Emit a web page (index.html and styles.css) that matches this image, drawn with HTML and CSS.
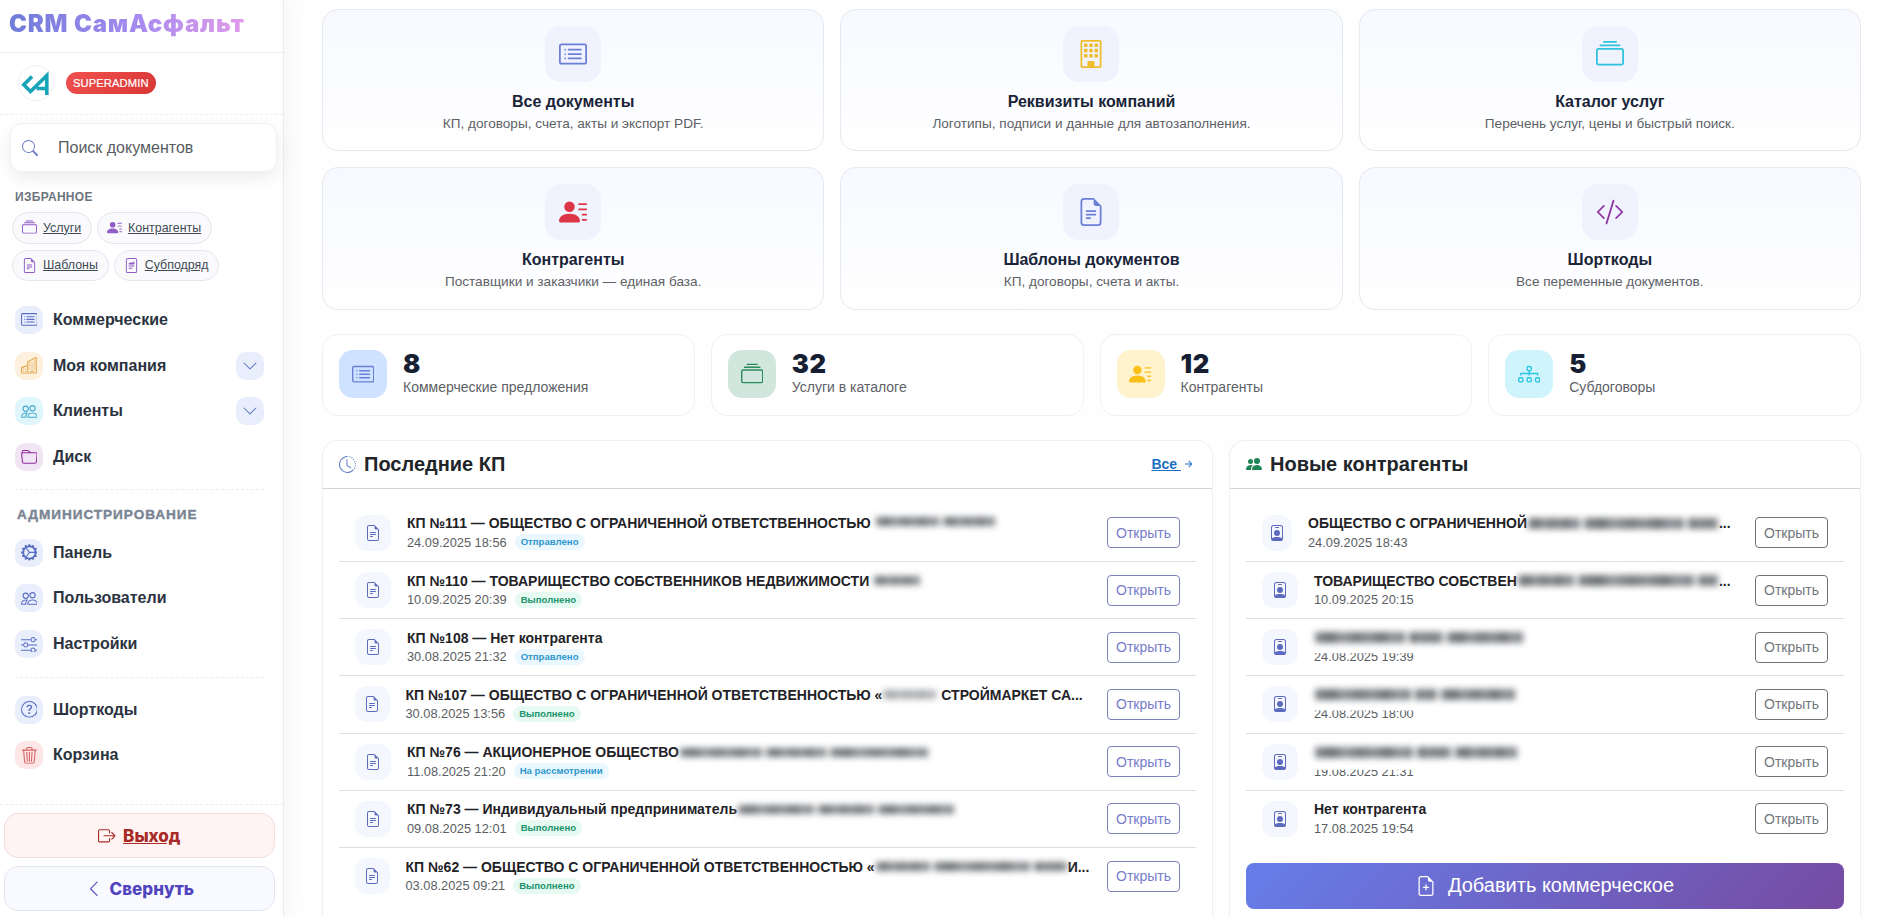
FILE: index.html
```html
<!DOCTYPE html>
<html lang="ru">
<head>
  <meta charset="UTF-8">
  <meta name="viewport" content="width=device-width, initial-scale=1.0">
  <title>CRM СамАсфальт</title>
  <link rel="stylesheet" href="styles.css">
</head>
<body>
  <!-- иконки -->
  <svg class="sprite" aria-hidden="true">
    <symbol id="card-list" viewBox="0 0 16 16"><path d="M14.5 3a.5.5 0 0 1 .5.5v9a.5.5 0 0 1-.5.5h-13a.5.5 0 0 1-.5-.5v-9a.5.5 0 0 1 .5-.5zm-13-1A1.5 1.5 0 0 0 0 3.5v9A1.5 1.5 0 0 0 1.5 14h13a1.5 1.5 0 0 0 1.5-1.5v-9A1.5 1.5 0 0 0 14.5 2z"/><path d="M5 8a.5.5 0 0 1 .5-.5h7a.5.5 0 0 1 0 1h-7A.5.5 0 0 1 5 8m0-2.5a.5.5 0 0 1 .5-.5h7a.5.5 0 0 1 0 1h-7a.5.5 0 0 1-.5-.5m0 5a.5.5 0 0 1 .5-.5h7a.5.5 0 0 1 0 1h-7a.5.5 0 0 1-.5-.5m-1-5a.5.5 0 1 1-1 0 .5.5 0 0 1 1 0M4 8a.5.5 0 1 1-1 0 .5.5 0 0 1 1 0m0 2.5a.5.5 0 1 1-1 0 .5.5 0 0 1 1 0"/></symbol>
    <symbol id="building" viewBox="0 0 16 16"><path d="M4.5 2h1a.5.5 0 0 1 .5.5v1a.5.5 0 0 1-.5.5h-1a.5.5 0 0 1-.5-.5v-1a.5.5 0 0 1 .5-.5m3 0h1a.5.5 0 0 1 .5.5v1a.5.5 0 0 1-.5.5h-1a.5.5 0 0 1-.5-.5v-1a.5.5 0 0 1 .5-.5m3 0h1a.5.5 0 0 1 .5.5v1a.5.5 0 0 1-.5.5h-1a.5.5 0 0 1-.5-.5v-1a.5.5 0 0 1 .5-.5m-6 3h1a.5.5 0 0 1 .5.5v1a.5.5 0 0 1-.5.5h-1a.5.5 0 0 1-.5-.5v-1a.5.5 0 0 1 .5-.5m3 0h1a.5.5 0 0 1 .5.5v1a.5.5 0 0 1-.5.5h-1a.5.5 0 0 1-.5-.5v-1a.5.5 0 0 1 .5-.5m3 0h1a.5.5 0 0 1 .5.5v1a.5.5 0 0 1-.5.5h-1a.5.5 0 0 1-.5-.5v-1a.5.5 0 0 1 .5-.5m-6 3h1a.5.5 0 0 1 .5.5v1a.5.5 0 0 1-.5.5h-1a.5.5 0 0 1-.5-.5v-1a.5.5 0 0 1 .5-.5m3 0h1a.5.5 0 0 1 .5.5v1a.5.5 0 0 1-.5.5h-1a.5.5 0 0 1-.5-.5v-1a.5.5 0 0 1 .5-.5m3 0h1a.5.5 0 0 1 .5.5v1a.5.5 0 0 1-.5.5h-1a.5.5 0 0 1-.5-.5v-1a.5.5 0 0 1 .5-.5"/><path d="M2 1a1 1 0 0 1 1-1h10a1 1 0 0 1 1 1v14a1 1 0 0 1-1 1H3a1 1 0 0 1-1-1zm11 0H3v14h3v-2.5a.5.5 0 0 1 .5-.5h3a.5.5 0 0 1 .5.5V15h3z"/></symbol>
    <symbol id="buildings" viewBox="0 0 16 16"><path d="M14.763.075A.5.5 0 0 1 15 .5v15a.5.5 0 0 1-.5.5h-3a.5.5 0 0 1-.5-.5V14h-1v1.5a.5.5 0 0 1-.5.5h-9a.5.5 0 0 1-.5-.5V10a.5.5 0 0 1 .342-.474L6 7.64V4.5a.5.5 0 0 1 .276-.447l8-4a.5.5 0 0 1 .487.022M6 8.694 1 10.36V15h5zM7 15h2v-1.5a.5.5 0 0 1 .5-.5h2a.5.5 0 0 1 .5.5V15h2V1.309l-7 3.5z"/><path d="M2 11h1v1H2zm2 0h1v1H4zm-2 2h1v1H2zm2 0h1v1H4zm4-4h1v1H8zm2 0h1v1h-1zm-2 2h1v1H8zm2 0h1v1h-1zm2-2h1v1h-1zm0 2h1v1h-1zM8 7h1v1H8zm2 0h1v1h-1zm2 0h1v1h-1zM8 5h1v1H8zm2 0h1v1h-1zm2 0h1v1h-1zm0-2h1v1h-1z"/></symbol>
    <symbol id="collection" viewBox="0 0 16 16"><path d="M2.5 3.5a.5.5 0 0 1 0-1h11a.5.5 0 0 1 0 1zm2-2a.5.5 0 0 1 0-1h7a.5.5 0 0 1 0 1zM0 13a1.5 1.5 0 0 0 1.5 1.5h13A1.5 1.5 0 0 0 16 13V6a1.5 1.5 0 0 0-1.5-1.5h-13A1.5 1.5 0 0 0 0 6zm1.5.5A.5.5 0 0 1 1 13V6a.5.5 0 0 1 .5-.5h13a.5.5 0 0 1 .5.5v7a.5.5 0 0 1-.5.5z"/></symbol>
    <symbol id="person-lines" viewBox="0 0 16 16"><path d="M6 8a3 3 0 1 0 0-6 3 3 0 0 0 0 6m-5 6s-1 0-1-1 1-4 6-4 6 3 6 4-1 1-1 1zM11 3.5a.5.5 0 0 1 .5-.5h4a.5.5 0 0 1 0 1h-4a.5.5 0 0 1-.5-.5m.5 2.5a.5.5 0 0 0 0 1h4a.5.5 0 0 0 0-1zm2 3a.5.5 0 0 0 0 1h2a.5.5 0 0 0 0-1zm0 3a.5.5 0 0 0 0 1h2a.5.5 0 0 0 0-1z"/></symbol>
    <symbol id="file-text" viewBox="0 0 16 16"><path d="M5.5 7a.5.5 0 0 0 0 1h5a.5.5 0 0 0 0-1zM5 9.5a.5.5 0 0 1 .5-.5h5a.5.5 0 0 1 0 1h-5a.5.5 0 0 1-.5-.5m0 2a.5.5 0 0 1 .5-.5h2a.5.5 0 0 1 0 1h-2a.5.5 0 0 1-.5-.5"/><path d="M9.5 0H4a2 2 0 0 0-2 2v12a2 2 0 0 0 2 2h8a2 2 0 0 0 2-2V4.5zm0 1v2A1.5 1.5 0 0 0 11 4.5h2V14a1 1 0 0 1-1 1H4a1 1 0 0 1-1-1V2a1 1 0 0 1 1-1z"/></symbol>
    <symbol id="file-plus" viewBox="0 0 16 16"><path d="M8 6.5a.5.5 0 0 1 .5.5v1.5H10a.5.5 0 0 1 0 1H8.5V11a.5.5 0 0 1-1 0V9.5H6a.5.5 0 0 1 0-1h1.5V7a.5.5 0 0 1 .5-.5"/><path d="M14 4.5V14a2 2 0 0 1-2 2H4a2 2 0 0 1-2-2V2a2 2 0 0 1 2-2h5.5zm-3 0A1.5 1.5 0 0 1 9.5 3V1H4a1 1 0 0 0-1 1v12a1 1 0 0 0 1 1h8a1 1 0 0 0 1-1V4.5z"/></symbol>
    <symbol id="file-sub" viewBox="0 0 16 16"><path d="M4 0a2 2 0 0 0-2 2v12a2 2 0 0 0 2 2h8a2 2 0 0 0 2-2V2a2 2 0 0 0-2-2zm0 1h8a1 1 0 0 1 1 1v12a1 1 0 0 1-1 1H4a1 1 0 0 1-1-1V2a1 1 0 0 1 1-1"/><path d="M5 5.200h1.500l1-1 1 1 2.500-1.700v3.300H5zM5 8h6v1H5zm0 2.500h4v1H5z"/></symbol>
    <symbol id="code-slash" viewBox="0 0 16 16"><path d="M10.478 1.647a.5.5 0 1 0-.956-.294l-4 13a.5.5 0 0 0 .956.294zM4.854 4.146a.5.5 0 0 1 0 .708L1.707 8l3.147 3.146a.5.5 0 0 1-.708.708l-3.5-3.5a.5.5 0 0 1 0-.708l3.5-3.5a.5.5 0 0 1 .708 0m6.292 0a.5.5 0 0 0 0 .708L14.293 8l-3.147 3.146a.5.5 0 0 0 .708.708l3.5-3.5a.5.5 0 0 0 0-.708l-3.5-3.5a.5.5 0 0 0-.708 0"/></symbol>
    <symbol id="search" viewBox="0 0 16 16"><path d="M11.742 10.344a6.5 6.5 0 1 0-1.397 1.398h-.001q.044.06.098.115l3.85 3.85a1 1 0 0 0 1.415-1.414l-3.85-3.85a1 1 0 0 0-.115-.1zM12 6.5a5.5 5.5 0 1 1-11 0 5.5 5.5 0 0 1 11 0"/></symbol>
    <symbol id="people" viewBox="0 0 16 16"><path d="M15 14s1 0 1-1-1-4-5-4-5 3-5 4 1 1 1 1zm-7.978-1L7 12.996c.001-.264.167-1.03.76-1.72C8.312 10.629 9.282 10 11 10c1.717 0 2.687.63 3.24 1.276.593.69.758 1.457.76 1.72l-.008.002-.014.002zM11 7a2 2 0 1 0 0-4 2 2 0 0 0 0 4m3-2a3 3 0 1 1-6 0 3 3 0 0 1 6 0M6.936 9.28a6 6 0 0 0-1.23-.247A7 7 0 0 0 5 9c-4 0-5 3-5 4q0 1 1 1h4.216A2.24 2.24 0 0 1 5 13c0-1.010.377-2.042 1.09-2.904.243-.294.526-.569.846-.816M4.920 10A5.500 5.500 0 0 0 4 13H1c0-.26.164-1.03.76-1.724.545-.636 1.492-1.256 3.160-1.275zM1.500 5.500a3 3 0 1 1 6 0 3 3 0 0 1-6 0m3-2a2 2 0 1 0 0 4 2 2 0 0 0 0-4"/></symbol>
    <symbol id="people-fill" viewBox="0 0 16 16"><path d="M7 14s-1 0-1-1 1-4 5-4 5 3 5 4-1 1-1 1zm4-6a3 3 0 1 0 0-6 3 3 0 0 0 0 6m-5.784 6A2.24 2.24 0 0 1 5 13c0-1.355.68-2.75 1.936-3.72A6.3 6.3 0 0 0 5 9c-4 0-5 3-5 4s1 1 1 1zM4.5 8a2.5 2.5 0 1 0 0-5 2.5 2.5 0 0 0 0 5"/></symbol>
    <symbol id="person-badge" viewBox="0 0 16 16"><path d="M6.5 2a.5.5 0 0 0 0 1h3a.5.5 0 0 0 0-1zM11 8a3 3 0 1 1-6 0 3 3 0 0 1 6 0"/><path d="M4.5 0A2.5 2.5 0 0 0 2 2.5V14a2 2 0 0 0 2 2h8a2 2 0 0 0 2-2V2.5A2.5 2.5 0 0 0 11.5 0zM3 2.5A1.5 1.5 0 0 1 4.5 1h7A1.5 1.5 0 0 1 13 2.5v10.795a4.2 4.2 0 0 0-.776-.492C11.392 12.387 10.063 12 8 12s-3.392.387-4.224.803a4.2 4.2 0 0 0-.776.492z"/></symbol>
    <symbol id="folder" viewBox="0 0 16 16"><path d="M.54 3.87.5 3a2 2 0 0 1 2-2h3.672a2 2 0 0 1 1.414.586l.828.828A2 2 0 0 0 9.828 3h3.982a2 2 0 0 1 1.992 2.181l-.637 7A2 2 0 0 1 13.174 14H2.826a2 2 0 0 1-1.991-1.819l-.637-7a2 2 0 0 1 .342-1.31zM2.19 4a1 1 0 0 0-.996 1.09l.637 7a1 1 0 0 0 .995.91h10.348a1 1 0 0 0 .995-.91l.637-7A1 1 0 0 0 13.81 4zm4.69-1.707A1 1 0 0 0 6.172 2H2.5a1 1 0 0 0-1 .981l.006.139q.323-.119.684-.12h5.396z"/></symbol>
    <symbol id="gear" viewBox="0 0 16 16"><path d="M7.068.727c.243-.97 1.62-.97 1.864 0l.071.286a.96.96 0 0 0 1.622.434l.205-.211c.695-.719 1.888-.03 1.613.931l-.08.284a.96.96 0 0 0 1.187 1.187l.283-.081c.96-.275 1.65.918.931 1.613l-.211.205a.96.96 0 0 0 .434 1.622l.286.071c.97.243.97 1.62 0 1.864l-.286.071a.96.96 0 0 0-.434 1.622l.211.205c.719.695.03 1.888-.931 1.613l-.284-.08a.96.96 0 0 0-1.187 1.187l.081.283c.275.96-.918 1.65-1.613.931l-.205-.211a.96.96 0 0 0-1.622.434l-.071.286c-.243.97-1.62.97-1.864 0l-.071-.286a.96.96 0 0 0-1.622-.434l-.205.211c-.695.719-1.888.03-1.613-.931l.08-.284a.96.96 0 0 0-1.186-1.187l-.284.081c-.96.275-1.65-.918-.931-1.613l.211-.205a.96.96 0 0 0-.434-1.622l-.286-.071c-.97-.243-.97-1.62 0-1.864l.286-.071a.96.96 0 0 0 .434-1.622l-.211-.205c-.719-.695-.03-1.888.931-1.613l.284.08a.96.96 0 0 0 1.187-1.186l-.081-.284c-.275-.96.918-1.65 1.613-.931l.205.211a.96.96 0 0 0 1.622-.434zM12.973 8.5H8.25l-2.834 3.779A4.998 4.998 0 0 0 12.973 8.5m0-1a4.998 4.998 0 0 0-7.557-3.779l2.834 3.78zM5.048 3.967l-.087.065zm-.431.355A4.98 4.98 0 0 0 3.002 8c0 1.455.622 2.765 1.615 3.678L7.375 8zm.344 7.646.087.065z"/></symbol>
    <symbol id="sliders" viewBox="0 0 16 16"><path fill-rule="evenodd" d="M11.5 2a1.5 1.5 0 1 0 0 3 1.5 1.5 0 0 0 0-3M9.05 3a2.5 2.5 0 0 1 4.9 0H16v1h-2.05a2.5 2.5 0 0 1-4.9 0H0V3zM4.5 7a1.5 1.5 0 1 0 0 3 1.5 1.5 0 0 0 0-3M2.05 8a2.5 2.5 0 0 1 4.9 0H16v1H6.95a2.5 2.5 0 0 1-4.9 0H0V8zm9.45 4a1.5 1.5 0 1 0 0 3 1.5 1.5 0 0 0 0-3m-2.45 1a2.5 2.5 0 0 1 4.9 0H16v1h-2.05a2.5 2.5 0 0 1-4.9 0H0v-1z"/></symbol>
    <symbol id="question" viewBox="0 0 16 16"><path d="M8 15A7 7 0 1 1 8 1a7 7 0 0 1 0 14m0 1A8 8 0 1 0 8 0a8 8 0 0 0 0 16"/><path d="M5.255 5.786a.237.237 0 0 0 .241.247h.825c.138 0 .248-.113.266-.25.09-.656.54-1.134 1.342-1.134.686 0 1.314.343 1.314 1.168 0 .635-.374.927-.965 1.371-.673.489-1.206 1.06-1.168 1.987l.003.217a.25.25 0 0 0 .25.246h.811a.25.25 0 0 0 .25-.25v-.105c0-.718.273-.927 1.01-1.486.609-.463 1.244-.977 1.244-2.056 0-1.511-1.276-2.241-2.673-2.241-1.267 0-2.655.59-2.75 2.286m1.557 5.763c0 .533.425.927 1.01.927.609 0 1.028-.394 1.028-.927 0-.552-.42-.94-1.029-.94-.584 0-1.009.388-1.009.94"/></symbol>
    <symbol id="trash" viewBox="0 0 16 16"><path d="M6.5 1h3a.5.5 0 0 1 .5.5v1H6v-1a.5.5 0 0 1 .5-.5M11 2.5v-1A1.5 1.5 0 0 0 9.5 0h-3A1.5 1.5 0 0 0 5 1.5v1H1.500a.5.5 0 0 0 0 1h.538l.853 10.66A2 2 0 0 0 4.885 16h6.23a2 2 0 0 0 1.994-1.84l.853-10.66h.538a.5.5 0 0 0 0-1zm1.958 1-.846 10.58a1 1 0 0 1-.997.92h-6.23a1 1 0 0 1-.997-.92L3.042 3.5zm-7.487 1a.5.5 0 0 1 .528.47l.5 8.5a.5.5 0 0 1-.998.06L5 5.03a.5.5 0 0 1 .47-.53zm5.058 0a.5.5 0 0 1 .47.53l-.5 8.5a.5.5 0 1 1-.998-.06l.5-8.5a.5.5 0 0 1 .528-.47M8 4.5a.5.5 0 0 1 .5.5v8.5a.5.5 0 0 1-1 0V5a.5.5 0 0 1 .5-.5"/></symbol>
    <symbol id="box-arrow" viewBox="0 0 16 16"><path d="M10 12.5a.5.5 0 0 1-.5.5h-8a.5.5 0 0 1-.5-.5v-9a.5.5 0 0 1 .5-.5h8a.5.5 0 0 1 .5.5v2a.5.5 0 0 0 1 0v-2A1.5 1.5 0 0 0 9.5 2h-8A1.5 1.5 0 0 0 0 3.5v9A1.5 1.5 0 0 0 1.5 14h8a1.5 1.5 0 0 0 1.5-1.5v-2a.5.5 0 0 0-1 0z"/><path d="M15.854 8.354a.5.5 0 0 0 0-.708l-3-3a.5.5 0 0 0-.708.708L14.293 7.5H5.5a.5.5 0 0 0 0 1h8.793l-2.147 2.146a.5.5 0 0 0 .708.708z"/></symbol>
    <symbol id="chevron-left" viewBox="0 0 16 16"><path d="M11.354 1.646a.5.5 0 0 1 0 .708L5.707 8l5.647 5.646a.5.5 0 0 1-.708.708l-6-6a.5.5 0 0 1 0-.708l6-6a.5.5 0 0 1 .708 0"/></symbol>
    <symbol id="chevron-down" viewBox="0 0 16 16"><path d="M1.646 4.646a.5.5 0 0 1 .708 0L8 10.293l5.646-5.647a.5.5 0 0 1 .708.708l-6 6a.5.5 0 0 1-.708 0l-6-6a.5.5 0 0 1 0-.708"/></symbol>
    <symbol id="arrow-right" viewBox="0 0 16 16"><path d="M4 8a.5.5 0 0 1 .5-.5h5.793L8.146 5.354a.5.5 0 1 1 .708-.708l3 3a.5.5 0 0 1 0 .708l-3 3a.5.5 0 0 1-.708-.708L10.293 8.5H4.5A.5.5 0 0 1 4 8"/></symbol>
    <symbol id="diagram" viewBox="0 0 16 16"><path fill-rule="evenodd" d="M6 3.5A1.5 1.5 0 0 1 7.5 2h1A1.5 1.5 0 0 1 10 3.5v1A1.5 1.5 0 0 1 8.5 6v1H14a.5.5 0 0 1 .5.5v1a.5.5 0 0 1-1 0V8h-5v.5a.5.5 0 0 1-1 0V8h-5v.5a.5.5 0 0 1-1 0v-1A.5.5 0 0 1 2 7h5.500V6A1.5 1.5 0 0 1 6 4.500zM8.500 5a.5.5 0 0 0 .5-.5v-1a.5.5 0 0 0-.5-.5h-1a.5.5 0 0 0-.5.5v1a.5.5 0 0 0 .5.5zM0 11.500A1.5 1.5 0 0 1 1.500 10h1A1.5 1.5 0 0 1 4 11.500v1A1.5 1.5 0 0 1 2.500 14h-1A1.5 1.5 0 0 1 0 12.500zm1.500-.5a.5.5 0 0 0-.5.5v1a.5.5 0 0 0 .5.5h1a.5.5 0 0 0 .5-.5v-1a.5.5 0 0 0-.5-.5zm4.500.5A1.5 1.5 0 0 1 7.500 10h1a1.5 1.5 0 0 1 1.500 1.500v1A1.5 1.5 0 0 1 8.500 14h-1A1.5 1.5 0 0 1 6 12.500zm1.500-.5a.5.5 0 0 0-.5.5v1a.5.5 0 0 0 .5.5h1a.5.5 0 0 0 .5-.5v-1a.5.5 0 0 0-.5-.5zm4.500.5a1.5 1.5 0 0 1 1.500-1.500h1a1.5 1.5 0 0 1 1.500 1.500v1a1.5 1.5 0 0 1-1.500 1.500h-1a1.5 1.5 0 0 1-1.500-1.500zm1.500-.5a.5.5 0 0 0-.5.5v1a.5.5 0 0 0 .5.5h1a.5.5 0 0 0 .5-.5v-1a.5.5 0 0 0-.5-.5z"/></symbol>
    <symbol id="clock" viewBox="0 0 16 16"><path d="M8.515 1.019A7 7 0 0 0 8 1V0a8 8 0 0 1 .589.022zm2.004.45a7 7 0 0 0-.985-.299l.219-.976q.576.129 1.126.342zm1.37.71a7 7 0 0 0-.439-.27l.493-.87a8 8 0 0 1 .979.654l-.615.789a7 7 0 0 0-.418-.302zm1.834 1.79a7 7 0 0 0-.653-.796l.724-.69q.406.429.747.91zm.744 1.352a7 7 0 0 0-.214-.468l.893-.45a8 8 0 0 1 .45 1.088l-.95.313a7 7 0 0 0-.179-.483m.53 2.507a7 7 0 0 0-.1-1.025l.985-.17q.1.58.116 1.17zm-.131 1.538q.05-.254.081-.51l.993.123a8 8 0 0 1-.23 1.155l-.964-.267q.069-.247.12-.501m-.952 2.379q.276-.436.486-.908l.914.405q-.24.54-.555 1.038zm-.964 1.205q.183-.183.35-.378l.758.653a8 8 0 0 1-.401.432z"/><path d="M8 1a7 7 0 1 0 4.95 11.95l.707.707A8.001 8.001 0 1 1 8 0z"/><path d="M7.5 3a.5.5 0 0 1 .5.5v5.21l3.248 1.856a.5.5 0 0 1-.496.868l-3.5-2A.5.5 0 0 1 7 9V3.5a.5.5 0 0 1 .5-.5"/></symbol>
  </svg>

  <aside class="sidebar">
    <div class="brand"><span class="brand-text">CRM СамАсфальт</span></div>

    <div class="user">
      <span class="avatar">
        <svg viewBox="0 0 34 34"><path d="M13 10.500 4.800 18.800l6.700 6.700L27.800 9.500V29M17.500 22.500h10" fill="none" stroke="#17a3b8" stroke-width="3.600"/></svg>
      </span>
      <span class="role">SUPERADMIN</span>
    </div>

    <div class="search">
      <svg class="icon"><use href="#search"/></svg>
      <span>Поиск документов</span>
    </div>

    <div class="fav-title">ИЗБРАННОЕ</div>
    <div class="favs">
      <a class="chip" href="#"><svg class="icon"><use href="#collection"/></svg><span>Услуги</span></a>
      <a class="chip" href="#"><svg class="icon"><use href="#person-lines"/></svg><span>Контрагенты</span></a>
      <a class="chip" href="#"><svg class="icon"><use href="#file-text"/></svg><span>Шаблоны</span></a>
      <a class="chip" href="#"><svg class="icon"><use href="#file-sub"/></svg><span>Субподряд</span></a>
    </div>

    <nav class="nav">
      <a class="nav-item" href="#"><span class="nav-icon"><svg class="icon"><use href="#card-list"/></svg></span>Коммерческие</a>
      <a class="nav-item" href="#"><span class="nav-icon orange"><svg class="icon"><use href="#buildings"/></svg></span>Моя компания<span class="toggle"><svg class="icon"><use href="#chevron-down"/></svg></span></a>
      <a class="nav-item" href="#"><span class="nav-icon cyan"><svg class="icon"><use href="#people"/></svg></span>Клиенты<span class="toggle"><svg class="icon"><use href="#chevron-down"/></svg></span></a>
      <a class="nav-item" href="#"><span class="nav-icon purple"><svg class="icon"><use href="#folder"/></svg></span>Диск</a>
      <div class="nav-title">АДМИНИСТРИРОВАНИЕ</div>
      <a class="nav-item" href="#"><span class="nav-icon"><svg class="icon"><use href="#gear"/></svg></span>Панель</a>
      <a class="nav-item" href="#"><span class="nav-icon"><svg class="icon"><use href="#people"/></svg></span>Пользователи</a>
      <a class="nav-item" href="#"><span class="nav-icon"><svg class="icon"><use href="#sliders"/></svg></span>Настройки</a>
      <div class="nav-sep"></div>
      <a class="nav-item" href="#"><span class="nav-icon"><svg class="icon"><use href="#question"/></svg></span>Шорткоды</a>
      <a class="nav-item" href="#"><span class="nav-icon red"><svg class="icon"><use href="#trash"/></svg></span>Корзина</a>
    </nav>

    <div class="side-footer">
      <a class="side-btn logout" href="#"><svg class="icon"><use href="#box-arrow"/></svg><span>Выход</span></a>
      <button class="side-btn collapse"><svg class="icon"><use href="#chevron-left"/></svg><span>Свернуть</span></button>
    </div>
  </aside>

  <main class="main">
    <section class="tiles">
      <a class="tile" href="#"><span class="tile-icon"><svg class="icon"><use href="#card-list"/></svg></span><b>Все документы</b><small>КП, договоры, счета, акты и экспорт PDF.</small></a>
      <a class="tile" href="#"><span class="tile-icon yellow"><svg class="icon"><use href="#building"/></svg></span><b>Реквизиты компаний</b><small>Логотипы, подписи и данные для автозаполнения.</small></a>
      <a class="tile" href="#"><span class="tile-icon aqua"><svg class="icon"><use href="#collection"/></svg></span><b>Каталог услуг</b><small>Перечень услуг, цены и быстрый поиск.</small></a>
      <a class="tile" href="#"><span class="tile-icon crimson"><svg class="icon"><use href="#person-lines"/></svg></span><b>Контрагенты</b><small>Поставщики и заказчики — единая база.</small></a>
      <a class="tile" href="#"><span class="tile-icon"><svg class="icon"><use href="#file-text"/></svg></span><b>Шаблоны документов</b><small>КП, договоры, счета и акты.</small></a>
      <a class="tile" href="#"><span class="tile-icon violet"><svg class="icon"><use href="#code-slash"/></svg></span><b>Шорткоды</b><small>Все переменные документов.</small></a>
    </section>

    <section class="stats">
      <div class="stat"><span class="stat-icon blue"><svg class="icon"><use href="#card-list"/></svg></span><div><div class="num">8</div><div class="label">Коммерческие предложения</div></div></div>
      <div class="stat"><span class="stat-icon green"><svg class="icon"><use href="#collection"/></svg></span><div><div class="num">32</div><div class="label">Услуги в каталоге</div></div></div>
      <div class="stat"><span class="stat-icon amber"><svg class="icon"><use href="#person-lines"/></svg></span><div><div class="num">12</div><div class="label">Контрагенты</div></div></div>
      <div class="stat"><span class="stat-icon sky"><svg class="icon"><use href="#diagram"/></svg></span><div><div class="num">5</div><div class="label">Субдоговоры</div></div></div>
    </section>

    <section class="panels">
      <div class="panel">
        <div class="panel-head">
          <h2><svg class="icon indigo"><use href="#clock"/></svg>Последние КП</h2>
          <a class="all" href="#"><u>Все </u><svg class="icon"><use href="#arrow-right"/></svg></a>
        </div>
        <div class="panel-body">
          <div class="row">
            <span class="row-icon"><svg class="icon"><use href="#file-text"/></svg></span>
            <div class="row-text"><div class="row-title">КП №111 — ОБЩЕСТВО С ОГРАНИЧЕННОЙ ОТВЕТСТВЕННОСТЬЮ <span class="mask high"><i style="width:63px"></i><i style="width:52px"></i></span></div><div class="row-meta">24.09.2025 18:56 <span class="badge sent">Отправлено</span></div></div>
            <button class="open">Открыть</button>
          </div>
          <div class="row">
            <span class="row-icon"><svg class="icon"><use href="#file-text"/></svg></span>
            <div class="row-text"><div class="row-title">КП №110 — ТОВАРИЩЕСТВО СОБСТВЕННИКОВ НЕДВИЖИМОСТИ <span class="mask"><i style="width:46px"></i></span></div><div class="row-meta">10.09.2025 20:39 <span class="badge done">Выполнено</span></div></div>
            <button class="open">Открыть</button>
          </div>
          <div class="row">
            <span class="row-icon"><svg class="icon"><use href="#file-text"/></svg></span>
            <div class="row-text"><div class="row-title">КП №108 — Нет контрагента</div><div class="row-meta">30.08.2025 21:32 <span class="badge sent">Отправлено</span></div></div>
            <button class="open">Открыть</button>
          </div>
          <div class="row tight">
            <span class="row-icon"><svg class="icon"><use href="#file-text"/></svg></span>
            <div class="row-text"><div class="row-title">КП №107 — ОБЩЕСТВО С ОГРАНИЧЕННОЙ ОТВЕТСТВЕННОСТЬЮ «<span class="mask pale"><i style="width:53px"></i></span> СТРОЙМАРКЕТ СА...</div><div class="row-meta">30.08.2025 13:56 <span class="badge done">Выполнено</span></div></div>
            <button class="open">Открыть</button>
          </div>
          <div class="row">
            <span class="row-icon"><svg class="icon"><use href="#file-text"/></svg></span>
            <div class="row-text"><div class="row-title">КП №76 — АКЦИОНЕРНОЕ ОБЩЕСТВО<span class="mask"><i style="width:82px"></i><i style="width:60px"></i><i style="width:98px"></i></span></div><div class="row-meta">11.08.2025 21:20 <span class="badge sent">На рассмотрении</span></div></div>
            <button class="open">Открыть</button>
          </div>
          <div class="row">
            <span class="row-icon"><svg class="icon"><use href="#file-text"/></svg></span>
            <div class="row-text"><div class="row-title">КП №73 — Индивидуальный предприниматель<span class="mask"><i style="width:76px"></i><i style="width:56px"></i><i style="width:76px"></i></span></div><div class="row-meta">09.08.2025 12:01 <span class="badge done">Выполнено</span></div></div>
            <button class="open">Открыть</button>
          </div>
          <div class="row tight">
            <span class="row-icon"><svg class="icon"><use href="#file-text"/></svg></span>
            <div class="row-text"><div class="row-title">КП №62 — ОБЩЕСТВО С ОГРАНИЧЕННОЙ ОТВЕТСТВЕННОСТЬЮ «<span class="mask"><i style="width:54px"></i><i style="width:96px"></i><i style="width:33px"></i></span>И...</div><div class="row-meta">03.08.2025 09:21 <span class="badge done">Выполнено</span></div></div>
            <button class="open">Открыть</button>
          </div>
        </div>
      </div>

      <div class="panel">
        <div class="panel-head">
          <h2><svg class="icon forest"><use href="#people-fill"/></svg>Новые контрагенты</h2>
        </div>
        <div class="panel-body">
          <div class="row narrow">
            <span class="row-icon"><svg class="icon"><use href="#person-badge"/></svg></span>
            <div class="row-text"><div class="row-title">ОБЩЕСТВО С ОГРАНИЧЕННОЙ<span class="mask dense"><i style="width:52px"></i><i style="width:100px"></i><i style="width:30px"></i></span>...</div><div class="row-meta">24.09.2025 18:43</div></div>
            <button class="open gray">Открыть</button>
          </div>
          <div class="row">
            <span class="row-icon"><svg class="icon"><use href="#person-badge"/></svg></span>
            <div class="row-text"><div class="row-title">ТОВАРИЩЕСТВО СОБСТВЕН<span class="mask dense"><i style="width:56px"></i><i style="width:116px"></i><i style="width:20px"></i></span>...</div><div class="row-meta">10.09.2025 20:15</div></div>
            <button class="open gray">Открыть</button>
          </div>
          <div class="row hidden-name">
            <span class="row-icon"><svg class="icon"><use href="#person-badge"/></svg></span>
            <div class="row-text"><div class="row-title"><span class="mask dense"><i style="width:90px"></i><i style="width:34px"></i><i style="width:76px"></i></span></div><div class="row-meta">24.08.2025 19:39</div></div>
            <button class="open gray">Открыть</button>
          </div>
          <div class="row hidden-name">
            <span class="row-icon"><svg class="icon"><use href="#person-badge"/></svg></span>
            <div class="row-text"><div class="row-title"><span class="mask dense"><i style="width:96px"></i><i style="width:22px"></i><i style="width:74px"></i></span></div><div class="row-meta">24.08.2025 18:00</div></div>
            <button class="open gray">Открыть</button>
          </div>
          <div class="row hidden-name deep">
            <span class="row-icon"><svg class="icon"><use href="#person-badge"/></svg></span>
            <div class="row-text"><div class="row-title"><span class="mask dense"><i style="width:98px"></i><i style="width:34px"></i><i style="width:62px"></i></span></div><div class="row-meta">19.08.2025 21:31</div></div>
            <button class="open gray">Открыть</button>
          </div>
          <div class="row">
            <span class="row-icon"><svg class="icon"><use href="#person-badge"/></svg></span>
            <div class="row-text"><div class="row-title">Нет контрагента</div><div class="row-meta">17.08.2025 19:54</div></div>
            <button class="open gray">Открыть</button>
          </div>
          <a class="add" href="#"><svg class="icon"><use href="#file-plus"/></svg>Добавить коммерческое</a>
        </div>
      </div>
    </section>
  </main>
</body>
</html>
```
FILE: styles.css
```css
* {
  box-sizing: border-box;
}
body {
  margin: 0;
  display: flex;
  height: 917px;
  overflow: hidden;
  background: #fefefe;
  color: #212529;
  font-family: "Liberation Sans", Arial, sans-serif;
  font-size: 16px;
}
a {
  color: inherit;
  text-decoration: none;
}
button {
  font-family: inherit;
}
.sprite {
  position: absolute;
  width: 0;
  height: 0;
}
.icon {
  width: 16px;
  height: 16px;
  fill: currentColor;
  flex: none;
  display: block;
}

/* боковая панель */
.sidebar {
  width: 284px;
  height: 917px;
  flex: none;
  display: flex;
  flex-direction: column;
  background: #fff;
  border-right: 1px solid #e9ebf0;
  box-shadow: 4px 0 20px rgba(0, 0, 0, 0.04);
}
.brand {
  height: 53px;
  padding: 9px 9px 0;
  border-bottom: 1px solid #e9eaee;
}
.brand-text {
  display: inline-block;
  font-family: Inter, "Liberation Sans", sans-serif;
  font-weight: 900;
  font-size: 24px;
  line-height: 30px;
  letter-spacing: 0.8px;
  white-space: nowrap;
  background: linear-gradient(90deg, #6f7bd9, #a78bef 55%, #e29bea);
  -webkit-background-clip: text;
  background-clip: text;
  color: transparent;
}
.user {
  height: 62px;
  padding: 0 18px 1px;
  display: flex;
  align-items: center;
  gap: 12px;
  border-bottom: 1px dashed #ececf1;
}
.avatar {
  width: 36px;
  height: 36px;
  border: 1px solid #eeeef6;
  border-radius: 50%;
}
.avatar svg {
  display: block;
}
.role {
  height: 22px;
  padding: 0 7px;
  border-radius: 11px;
  background: linear-gradient(135deg, #f0524f, #d93636);
  color: #fff;
  font-size: 11.2px;
  line-height: 22px;
  letter-spacing: 0.1px;
  -webkit-text-stroke: 0.2px #fff;
}
.search {
  height: 49px;
  margin: 8px 6px 0 10px;
  padding: 0 11px;
  display: flex;
  align-items: center;
  gap: 20px;
  border: 1px solid #eef0f4;
  border-radius: 12px;
  box-shadow: 0 6px 18px rgba(0, 0, 0, 0.08);
  color: #595c5f;
  font-size: 16px;
}
.search .icon {
  color: #6f7fc8;
}
.fav-title {
  margin: 17px 15px 0;
  font-size: 12px;
  line-height: 16px;
  font-weight: bold;
  letter-spacing: 0.3px;
  color: #6c757d;
}
.favs {
  margin: 7px 12px 0;
  display: flex;
  flex-wrap: wrap;
  gap: 6px 5px;
}
.chip {
  height: 31.5px;
  padding: 0 10px 0 9px;
  display: flex;
  align-items: center;
  gap: 6px;
  border: 1px solid #e6e4ee;
  border-radius: 16px;
  background: #fafafc;
  color: #3f4a55;
  font-size: 12.4px;
  text-decoration: underline;
}
.chip .icon {
  width: 15px;
  height: 15px;
  color: #8f5bc4;
}
.nav {
  margin-top: 16px;
  padding: 0 19px 0 15px;
}
.nav-item {
  height: 45.7px;
  display: flex;
  align-items: center;
  gap: 10px;
  font-weight: bold;
  font-size: 16px;
  color: #2b3340;
}
.nav-icon,
.toggle {
  width: 28px;
  height: 28px;
  display: flex;
  align-items: center;
  justify-content: center;
  border-radius: 10px;
  background: #e9eefc;
  color: #5a6fc4;
}
.nav-icon .icon {
  width: 16.8px;
  height: 16.8px;
}
.toggle {
  margin-left: auto;
}
.nav-icon.orange {
  background: #fdf0dc;
  color: #e3a447;
}
.nav-icon.cyan {
  background: #e0f6fd;
  color: #45a9cc;
}
.nav-icon.purple {
  background: #f1e4f4;
  color: #8e2c9c;
}
.nav-icon.red {
  background: #fde6e6;
  color: #d95f5f;
}
.nav-title {
  height: 50px;
  margin-top: 9px;
  padding: 16px 2px 0;
  border-top: 1px dashed #ececf1;
  font-size: 13.6px;
  line-height: 18px;
  font-weight: bold;
  letter-spacing: 0.95px;
  color: #7a8594;
  -webkit-text-stroke: 0.4px #7a8594;
}
.nav-title + .nav-item {
  margin-top: -9px;
}
.nav-sep {
  height: 1px;
  margin: 10px 0 9px;
  border-top: 1px dashed #ececf1;
}
.side-footer {
  margin-top: auto;
  padding: 8px 8px 6px 4px;
  display: flex;
  flex-direction: column;
  gap: 8px;
  border-top: 1px dashed #ececf1;
}
.side-btn {
  height: 45px;
  padding: 0;
  display: flex;
  align-items: center;
  justify-content: center;
  gap: 7px;
  border: 1px solid #e3e5ee;
  border-radius: 14px;
  font-family: Inter, "Liberation Sans", sans-serif;
  font-size: 17px;
  font-weight: 800;
}
.side-btn .icon {
  width: 17.6px;
  height: 17.6px;
}
.logout {
  background: #fff4f3;
  border-color: #f2dcdc;
  color: #a82a26;
}
.logout span {
  text-decoration: underline;
}
.collapse {
  background: #f9faff;
  color: #5145bf;
}

/* контент */
.main {
  flex: 1;
  height: 917px;
  padding: 9px 28px 0 38px;
  min-width: 0;
  display: flex;
  flex-direction: column;
}
.tiles {
  display: grid;
  grid-template-columns: repeat(3, 1fr);
  gap: 16px;
}
.tile {
  height: 142.4px;
  padding-top: 16px;
  display: flex;
  flex-direction: column;
  align-items: center;
  border: 1px solid #e6e8f2;
  border-radius: 16px;
  background: linear-gradient(180deg, #f7f9ff, #fff);
}
.tile-icon {
  width: 56px;
  height: 56px;
  display: flex;
  align-items: center;
  justify-content: center;
  border-radius: 16px;
  background: #f0f2fd;
  color: #6b7fd7;
}
.tile-icon .icon {
  width: 28px;
  height: 28px;
}
.tile b {
  margin-top: 10px;
  font-size: 16px;
  line-height: 20px;
  color: #1a2438;
}
.tile small {
  margin-top: 2px;
  font-size: 13.6px;
  line-height: 20px;
  color: #5d6166;
}
.tile-icon.yellow {
  color: #f0bd2a;
}
.tile-icon.aqua {
  color: #2fc4de;
}
.tile-icon.crimson {
  color: #dc3545;
}
.tile-icon.violet {
  color: #8e35a0;
}
.stats {
  margin-top: 24px;
  display: grid;
  grid-template-columns: repeat(4, 1fr);
  gap: 16px;
}
.stat {
  height: 82px;
  padding: 0 16px 2px;
  display: flex;
  align-items: center;
  gap: 16px;
  border: 1px solid #edf1f5;
  border-radius: 16px;
  background: #fff;
}
.stat-icon {
  width: 48px;
  height: 48px;
  display: flex;
  align-items: center;
  justify-content: center;
  border-radius: 14px;
}
.stat-icon .icon {
  width: 22.4px;
  height: 22.4px;
}
.stat-icon.blue {
  background: #cfe2ff;
  color: #6b7fd7;
}
.stat-icon.green {
  background: #d1e7dd;
  color: #2b8a5e;
}
.stat-icon.amber {
  background: #fff3cd;
  color: #fbc016;
}
.stat-icon.sky {
  background: #cff4fc;
  color: #2cc5e4;
}
.num {
  font-family: Inter, "Liberation Sans", sans-serif;
  font-size: 25.6px;
  line-height: 26px;
  font-weight: 900;
  letter-spacing: 0.6px;
  color: #172033;
}
.label {
  font-size: 14px;
  line-height: 20px;
  color: #5d6166;
}
.panels {
  flex: 1;
  margin-top: 24px;
  display: grid;
  grid-template-columns: 891px 1fr;
  gap: 16px;
}
.panel {
  border: 1px solid #edf0f4;
  border-bottom: 0;
  border-radius: 16px 16px 0 0;
  background: #fff;
}
.panel-head {
  height: 48px;
  padding: 0 16px;
  display: flex;
  align-items: center;
  justify-content: space-between;
  border-bottom: 1px solid #d3d5d8;
}
.panel-head h2 {
  margin: 0;
  display: flex;
  align-items: center;
  gap: 8px;
  font-size: 20px;
}
.indigo {
  width: 17px;
  height: 17px;
  color: #667eca;
}
.forest {
  color: #1f8556;
}
.all {
  display: flex;
  align-items: center;
  font-size: 14px;
  font-weight: bold;
  color: #1a6fc4;
}
.all .icon {
  width: 15px;
}
.all u {
  white-space: pre;
}
.panel-body {
  padding: 16px 16px 0;
}
.row {
  height: 57.2px;
  padding: 0 16px;
  display: flex;
  align-items: center;
  border-bottom: 1px solid #dcdfe2;
}
.row:last-child,
.row:has(+ .add) {
  height: 56.2px;
  border-bottom: 0;
}
.row-icon {
  width: 36px;
  height: 36px;
  flex: none;
  display: flex;
  align-items: center;
  justify-content: center;
  border-radius: 12px;
  background: #f4f7fe;
  color: #5c6bbd;
}
.tight .row-icon {
  width: 34.5px;
}
.narrow .row-icon {
  width: 30px;
}
.row-text {
  flex: 1;
  min-width: 0;
  margin-left: 16px;
}
.row-title {
  display: flex;
  align-items: center;
  height: 19px;
  font-size: 14px;
  font-weight: bold;
  white-space: pre;
  color: #1f2226;
}
.row-meta {
  display: flex;
  align-items: center;
  height: 19px;
  font-size: 12.8px;
  color: #5a5e62;
}
.badge {
  height: 16px;
  margin-left: 8px;
  padding: 0 6px;
  border-radius: 8px;
  font-size: 9.6px;
  line-height: 16px;
  font-weight: bold;
}
.badge.sent {
  background: #eaf7fe;
  color: #2f97cd;
}
.badge.done {
  background: #e6faf2;
  color: #20946c;
}
/* скрытые данные */
.mask {
  display: inline-flex;
  align-items: center;
  gap: 4px;
  margin: 0 1px;
  filter: blur(3px);
}
.mask i {
  height: 9px;
  background: linear-gradient(90deg, #85888c, #696d71 18%, #95989c 30%, #73777b 46%, #8c8f93 60%, #6b6f73 74%, #92959a 86%, #7c8084);
}
.mask.high {
  margin-top: -3px;
}
.mask.pale {
  opacity: 0.65;
}
.mask.dense i {
  height: 11px;
}
.hidden-name .row-meta {
  clip-path: inset(6px 0 0 0);
}
.hidden-name.deep .row-meta {
  clip-path: inset(8px 0 0 0);
}
.open {
  width: 73px;
  height: 31px;
  padding: 0;
  border: 1px solid #7c80bb;
  border-radius: 4px;
  background: transparent;
  color: #767ccb;
  font-size: 14px;
}
.open.gray {
  border-color: #6f7377;
  color: #71767b;
}
.add {
  height: 46px;
  margin-top: 16px;
  display: flex;
  align-items: center;
  justify-content: center;
  gap: 12px;
  border-radius: 8px;
  background: linear-gradient(135deg, #667eea, #764ba2);
  color: #fff;
  font-size: 20px;
}
.add .icon {
  width: 20px;
  height: 20px;
}
```
